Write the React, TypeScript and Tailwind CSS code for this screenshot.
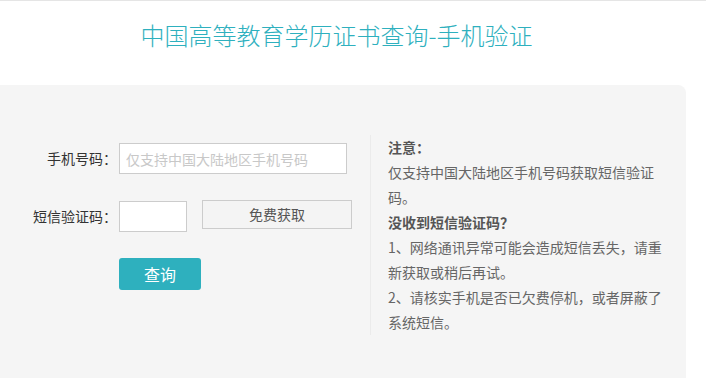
import React from "react";

const font = { fontFamily: '"Noto Sans CJK SC", "Noto Sans", sans-serif' };

export default function App() {
  return (
    <div
      className="w-[706px] h-[378px] overflow-hidden bg-white border-t border-[#e5e5e5] text-[14px]"
      style={font}
    >
      <div className="w-[673px] h-[84px] pt-[19px] text-center text-[24px] leading-[30px] text-[#2eb0be] font-light">
        中国高等教育学历证书查询-手机验证
      </div>

      <div className="w-[686px] h-[300px] bg-[#f5f5f5] rounded-tr-[8px] pt-[50px] flex items-start">
        {/* form */}
        <div className="w-[370px] mt-[8px] flex flex-col">
          <div className="flex items-center h-[31px]">
            <label className="w-[117px] text-right text-[#333] leading-[31px]">手机号码：</label>
            <input
              className="ml-[2px] w-[228px] h-[31px] bg-white border border-[#ccc] px-[6px] text-[14px] text-[#333] placeholder:text-[#c8c8c8] outline-none"
              placeholder="仅支持中国大陆地区手机号码"
            />
          </div>

          <div className="flex items-start h-[31px] mt-[27px]">
            <label className="w-[117px] text-right text-[#333] leading-[31px]">短信验证码：</label>
            <input className="ml-[2px] w-[68px] h-[31px] bg-white border border-[#ccc] outline-none" />
            <button className="ml-[15px] -mt-[1px] w-[150px] h-[29px] bg-[#f4f4f4] border border-[#ccc] text-[#555] leading-[27px]">
              免费获取
            </button>
          </div>

          <div className="mt-[26px] pl-[119px]">
            <button className="w-[82px] h-[32px] rounded-[3px] bg-[#2eb0be] text-white text-[16px] leading-[32px]">
              查询
            </button>
          </div>
        </div>

        {/* notes */}
        <div className="w-[294px] border-l border-[#ebebeb] pl-[17px] text-[#666] leading-[25px]">
          <p className="font-bold text-[#555]">注意：</p>
          <p className="w-[276px]">仅支持中国大陆地区手机号码获取短信验证码。</p>
          <p className="font-bold text-[#555]">没收到短信验证码？</p>
          <p className="w-[276px]">1、网络通讯异常可能会造成短信丢失，请重新获取或稍后再试。</p>
          <p className="w-[276px]">2、请核实手机是否已欠费停机，或者屏蔽了系统短信。</p>
        </div>
      </div>
    </div>
  );
}
